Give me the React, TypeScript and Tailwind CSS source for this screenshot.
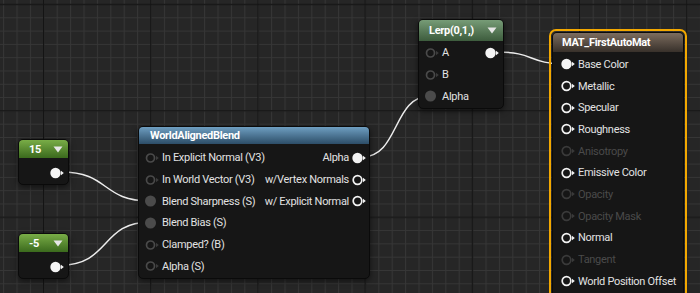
import React from "react"

// Pin glyph used on every node: a circle plus the small direction arrow
type PinProps = { filled?: boolean; color: string; arrow?: boolean; arrowColor?: string; r?: number }

function Pin({ filled = false, color, arrow = true, arrowColor, r }: PinProps) {
  return (
    <svg width="14" height="12" viewBox="0 0 14 12" className="shrink-0">
      {filled ? (
        <circle cx="5.5" cy="6" r={r ?? 5.2} fill={color} />
      ) : (
        <circle cx="5.5" cy="6" r={r ?? 4.3} fill="none" stroke={color} strokeWidth="1.7" />
      )}
      {arrow && <path d="M11 3.7L13.8 6L11 8.3Z" fill={arrowColor ?? color} />}
    </svg>
  )
}

function Caret() {
  return (
    <svg width="10" height="7" viewBox="0 0 10 7" className="shrink-0">
      <path d="M0.5 0.5H9.5L5 6.5Z" fill="#e6e6e6" />
    </svg>
  )
}

// bezier wire with horizontal tangents, like the graph editor draws them
function wire(x1: number, y1: number, x2: number, y2: number) {
  const d = Math.max(30, Math.abs(x2 - x1) * 0.55)
  return `M${x1} ${y1} C${x1 + d} ${y1} ${x2 - d} ${y2} ${x2} ${y2}`
}

function Backdrop() {
  return (
    <svg width="700" height="293" className="absolute inset-0">
      <defs>
        <pattern id="minor" width="13.4" height="13.3" x="43.3" y="4" patternUnits="userSpaceOnUse">
          <path d="M0 0.5H13.4M0.5 0V13.3" stroke="#363636" strokeWidth="1" />
        </pattern>
        <pattern id="major" width="107.2" height="106.4" x="43" y="3.8" patternUnits="userSpaceOnUse">
          <path d="M0 0.6H107.2M0.6 0V106.4" stroke="#141414" strokeWidth="1.3" />
        </pattern>
      </defs>
      <rect width="700" height="293" fill="#262626" />
      <rect width="700" height="293" fill="url(#minor)" />
      <rect width="700" height="293" fill="url(#major)" />
      <g fill="none" stroke="#ececec" strokeWidth="1.5">
        <path d={wire(61, 172, 150, 201)} />
        <path d={wire(61, 265, 150, 222)} />
        <path d={wire(362, 157, 430, 96)} />
        <path d={wire(497, 52, 566, 64)} />
      </g>
    </svg>
  )
}

const nodeBody =
  "absolute rounded-[5px] border border-[#0a0a0a] bg-[#161616] shadow-[0_2px_6px_rgba(0,0,0,0.55)]"

function Constant({ value, pos }: { value: string; pos: string }) {
  return (
    <div className={`${nodeBody} w-[51px] ${pos}`}>
      <div className="flex h-[18px] items-center justify-between rounded-t-[4px] bg-linear-to-b from-[#79ad47] to-[#3b6a1d] pl-[10px] pr-[5px] font-bold text-white">
        <span>{value}</span>
        <Caret />
      </div>
      <div className="flex h-[26px] items-center justify-end pr-[4px] pt-[3px]">
        <Pin filled color="#f4f4f4" />
      </div>
    </div>
  )
}

type InRow = { label: string; kind: "open" | "wired" | "white" | "whiteFilled" | "off" }

function InputRow({ label, kind }: InRow) {
  const pin =
    kind === "open" ? (
      <Pin color="#4a4a4a" arrowColor="#3c3c3c" r={4} />
    ) : kind === "wired" ? (
      <Pin filled color="#4b4b4b" arrow={false} r={5.5} />
    ) : kind === "white" ? (
      <Pin color="#f2f2f2" />
    ) : kind === "whiteFilled" ? (
      <Pin filled color="#f4f4f4" />
    ) : (
      <Pin color="#3a3a3a" />
    )
  return (
    <div className="flex h-[21.7px] items-center gap-[3.5px] whitespace-nowrap">
      {pin}
      <span className={kind === "off" ? "text-[#4a4a4a]" : "text-[#e2e2e2]"}>{label}</span>
    </div>
  )
}

function OutputRow({ label, filled }: { label: string; filled?: boolean }) {
  return (
    <div className="flex h-[21.7px] items-center justify-end gap-[3px] whitespace-nowrap">
      <span className="text-[#e2e2e2]">{label}</span>
      <Pin filled={filled} color="#f2f2f2" />
    </div>
  )
}

function WorldAlignedBlend() {
  return (
    <div className={`${nodeBody} left-[138px] top-[126px] w-[232px]`}>
      <div className="flex h-[17px] items-center rounded-t-[4px] bg-linear-to-b from-[#6f9fc2] to-[#2d4e68] pl-[11px] font-bold text-white">
        WorldAlignedBlend
      </div>
      <div className="grid grid-cols-[1fr_auto] pb-[1px] pt-[3px]">
        <div className="pl-[5.5px]">
          <InputRow label="In Explicit Normal (V3)" kind="open" />
          <InputRow label="In World Vector (V3)" kind="open" />
          <InputRow label="Blend Sharpness (S)" kind="wired" />
          <InputRow label="Blend Bias (S)" kind="wired" />
          <InputRow label="Clamped? (B)" kind="open" />
          <InputRow label="Alpha (S)" kind="open" />
        </div>
        <div className="pr-[5px]">
          <OutputRow label="Alpha" filled />
          <OutputRow label="w/Vertex Normals" />
          <OutputRow label="w/ Explicit Normal" />
        </div>
      </div>
    </div>
  )
}

function Lerp() {
  return (
    <div className={`${nodeBody} left-[418px] top-[19px] w-[86px]`}>
      <div className="flex h-[21px] items-center justify-between rounded-t-[4px] bg-linear-to-b from-[#779c77] to-[#3d5c3d] pl-[10px] pr-[6px] font-bold text-white">
        <span>Lerp(0,1,)</span>
        <Caret />
      </div>
      <div className="grid grid-cols-[1fr_auto] pb-[1px] pt-[1px]">
        <div className="pl-[5.5px]">
          <InputRow label="A" kind="open" />
          <InputRow label="B" kind="open" />
          <InputRow label="Alpha" kind="wired" />
        </div>
        <div className="pr-[4.5px]">
          <div className="flex h-[21.7px] items-center justify-end">
            <Pin filled color="#f4f4f4" />
          </div>
        </div>
      </div>
    </div>
  )
}

const materialInputs: InRow[] = [
  { label: "Base Color", kind: "whiteFilled" },
  { label: "Metallic", kind: "white" },
  { label: "Specular", kind: "white" },
  { label: "Roughness", kind: "white" },
  { label: "Anisotropy", kind: "off" },
  { label: "Emissive Color", kind: "white" },
  { label: "Opacity", kind: "off" },
  { label: "Opacity Mask", kind: "off" },
  { label: "Normal", kind: "white" },
  { label: "Tangent", kind: "off" },
  { label: "World Position Offset", kind: "white" },
]

function MaterialResult() {
  return (
    <div className="absolute left-[549px] top-[29px] w-[138px] rounded-[7px] border-2 border-[#f3a800] p-[1px]">
      <div className="rounded-[5px] border border-[#0a0a0a] bg-[#161616] pb-[24px]">
        <div className="flex h-[19px] items-center rounded-t-[4px] bg-linear-to-b from-[#7d6d5f] to-[#38312b] pl-[9px] font-bold text-white">
          MAT_FirstAutoMat
        </div>
        <div className="pl-[7.5px] pt-[1.5px]">
          {materialInputs.map((row) => (
            <InputRow key={row.label} {...row} />
          ))}
        </div>
      </div>
    </div>
  )
}

export default function App() {
  return (
    <div className="relative h-[293px] w-[700px] overflow-hidden bg-[#262626] font-['Roboto',sans-serif] text-[11px] leading-none tracking-[-0.3px]">
      <Backdrop />
      <Constant value="15" pos="left-[18px] top-[139px]" />
      <Constant value="-5" pos="left-[18px] top-[233px]" />
      <WorldAlignedBlend />
      <Lerp />
      <MaterialResult />
    </div>
  )
}
